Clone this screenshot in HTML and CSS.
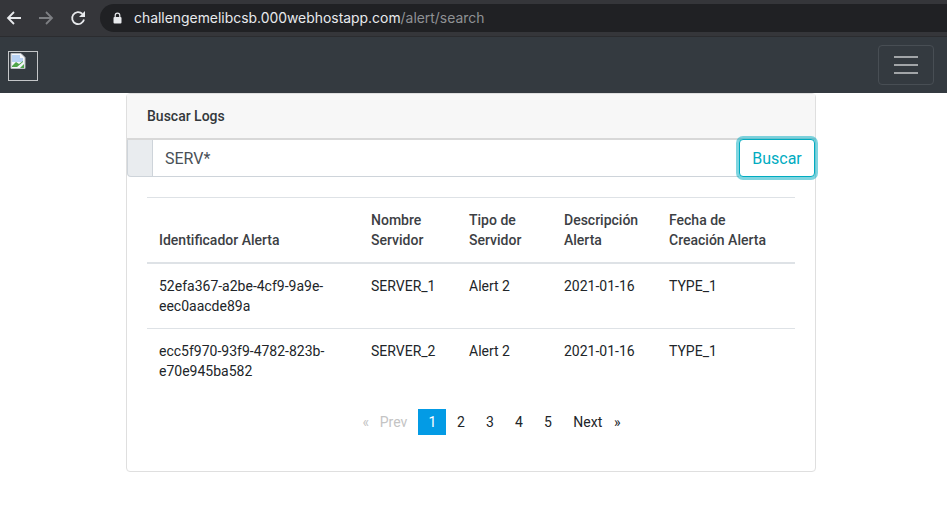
FILE: index.html
```html
<!DOCTYPE html>
<html lang="es">
<head>
<meta charset="utf-8">
<title>Buscar Logs</title>
<link rel="stylesheet" href="styles.css">
</head>
<body>
<div class="chrome">
  <svg class="nav-icon" width="16" height="16" viewBox="0 0 16 16"><path d="M15 8H2M8 2 2 8l6 6" fill="none" stroke="#e8eaed" stroke-width="1.8"/></svg>
  <svg class="nav-icon" width="16" height="16" viewBox="0 0 16 16"><path d="M1 8h13M8 2l6 6-6 6" fill="none" stroke="#7d7f83" stroke-width="1.8"/></svg>
  <svg class="nav-icon" width="16" height="16" viewBox="0 0 16 16"><path d="M14 9.5A6 6 0 1 1 12.4 3.9" fill="none" stroke="#e8eaed" stroke-width="1.8"/><path d="M15 1v6H9z" fill="#e8eaed"/></svg>
  <div class="url">
    <svg width="9" height="12" viewBox="0 0 9 12"><path d="M2.2 5V3.4a2.3 2.3 0 0 1 4.6 0V5" fill="none" stroke="#e8eaed" stroke-width="1.2"/><rect x="0.5" y="5" width="8" height="6.5" rx="1" fill="#e8eaed"/></svg>
    <span class="host">challengemelibcsb.000webhostapp.com<span class="path">/alert/search</span></span>
  </div>
</div>
<nav class="navbar">
  <span class="logo">
    <svg width="16" height="16" viewBox="0 0 16 16"><path d="M1 .5h10l4 4v11H1z" fill="#f4f6fa" stroke="#b9bcc0"/><path d="M2 2h8v3h3v4H2z" fill="#b9d2f3"/><path d="M2 13l4-4 3 2 4-3v1l-6 5H2z" fill="#4fa54b"/><path d="M10 15l4-4v4z" fill="#4fa54b"/></svg>
  </span>
  <button class="toggler" aria-label="Menu"><span></span><span></span><span></span></button>
</nav>
<main class="wrap">
  <section class="card">
    <header class="card-header">Buscar Logs</header>
    <div class="search">
      <span class="prepend"></span>
      <input class="input" value="SERV*">
      <button class="btn">Buscar</button>
    </div>
    <div class="card-body">
      <table class="table">
        <thead>
          <tr><th class="c1">Identificador Alerta</th><th class="c2">Nombre Servidor</th><th class="c3">Tipo de Servidor</th><th class="c4">Descripción Alerta</th><th class="c5">Fecha de Creación Alerta</th></tr>
        </thead>
        <tbody>
          <tr><td>52efa367-a2be-4cf9-9a9e-eec0aacde89a</td><td>SERVER_1</td><td>Alert 2</td><td>2021-01-16</td><td>TYPE_1</td></tr>
          <tr><td>ecc5f970-93f9-4782-823b-e70e945ba582</td><td>SERVER_2</td><td>Alert 2</td><td>2021-01-16</td><td>TYPE_1</td></tr>
        </tbody>
      </table>
      <ul class="pagination">
        <li class="disabled arrow">«</li>
        <li class="disabled prev">Prev</li>
        <li class="active">1</li>
        <li>2</li>
        <li>3</li>
        <li>4</li>
        <li>5</li>
        <li class="next">Next</li>
        <li class="arrow">»</li>
      </ul>
    </div>
  </section>
</main>
</body>
</html>
```

FILE: styles.css
```css
* { box-sizing: border-box; }
html, body { margin: 0; padding: 0; height: 514px; overflow: hidden; background: #fff; }
body { font-family: Roboto, "Liberation Sans", sans-serif; font-size: 14px; color: #212529; }

.chrome {
  height: 37px;
  background: #35363a;
  border-bottom: 1px solid #2b2c2f;
  display: flex;
  align-items: center;
  padding: 0 0 0 6px;
  gap: 16px;
}
.nav-icon { flex: none; }
.url {
  flex: 1;
  height: 28px;
  margin-left: -2px;
  background: #202124;
  border-radius: 14px 0 0 14px;
  display: flex;
  align-items: center;
  padding-left: 13px;
  gap: 12px;
}
.host { font-family: Inter, Roboto, sans-serif; font-size: 13.92px; color: #e8eaed; white-space: nowrap; }
.path { color: #8f9194; }

.navbar {
  height: 56px;
  background: #343a40;
  display: flex;
  align-items: center;
  justify-content: space-between;
  padding: 0 13px 0 8px;
}
.logo {
  width: 30px;
  height: 30px;
  border: 1px solid #c4c6c8;
  margin-top: 1px;
  padding: 1px 0 0 1px;
  display: block;
}
.logo svg { display: block; }
.toggler {
  width: 56px;
  height: 40px;
  background: transparent;
  border: 1px solid #484e54;
  border-radius: 4px;
  display: flex;
  flex-direction: column;
  align-items: center;
  justify-content: center;
  gap: 6px;
  padding: 0;
}
.toggler span { display: block; width: 24px; height: 2px; background: #a2a5a8; }

.wrap { padding-left: 126px; }
.card {
  width: 690px;
  height: 379px;
  border: 1px solid #dfdfdf;
  border-radius: 4px;
  background: #fff;
}
.card-header {
  height: 46px;
  background: #f7f7f7;
  border-bottom: 2px solid #d8d8d8;
  padding: 14px 20px 0;
  font-size: 14px;
  font-weight: 500;
  line-height: 16px;
  color: #33373b;
}
.search { display: flex; height: 37px; }
.prepend {
  width: 26px;
  background: #e9ecef;
  border: 1px solid #ced4da;
  border-radius: 0 0 0 4px;
  border-top: 0;
}
.input {
  flex: 1;
  min-width: 0;
  border: 0;
  border-bottom: 1px solid #ced4da;
  padding: 0 12px;
  font: 16px Roboto, sans-serif;
  color: #495057;
  outline: 0;
  background: #fff;
}
.btn {
  width: 76px;
  height: 38px;
  margin-top: -1px;
  background: #fff;
  border: 1px solid #00acc1;
  border-radius: 4px;
  box-shadow: 0 0 0 3px rgba(0, 172, 193, .5);
  font: 16px Roboto, sans-serif;
  color: #00acc1;
  padding: 0;
  position: relative;
}

.card-body { padding: 20px 20px 0; }
.table { width: 648px; border-collapse: collapse; table-layout: fixed; border-top: 1px solid #dee2e6; }
.c1 { width: 212px; }
.c2 { width: 98px; }
.c3 { width: 95px; }
.c4 { width: 105px; }
th, td { padding: 12px; line-height: 20px; text-align: left; font-size: 14px; }
th { vertical-align: bottom; font-weight: 500; height: 65px; border-bottom: 2px solid #dee2e6; color: #3c4044; }
td { vertical-align: top; height: 65px; font-weight: 400; border-bottom: 1px solid #dee2e6; }
tbody tr:last-child td { border-bottom: 0; }

.pagination {
  list-style: none;
  margin: 15px 0 0;
  padding: 0 0 0 41px;
  display: flex;
  justify-content: center;
  align-items: center;
  height: 26px;
}
.pagination li { width: 29px; height: 26px; line-height: 26px; text-align: center; font-size: 14px; }
.pagination .prev { width: auto; padding: 0 11px 0 7px; }
.pagination .next { width: auto; padding: 0 8px 0 11px; }
.pagination .arrow { width: 14px; }
.pagination .disabled { color: #c4c4c4; }
.pagination .active { width: 28px; background: #039be5; color: #fff; }
```
